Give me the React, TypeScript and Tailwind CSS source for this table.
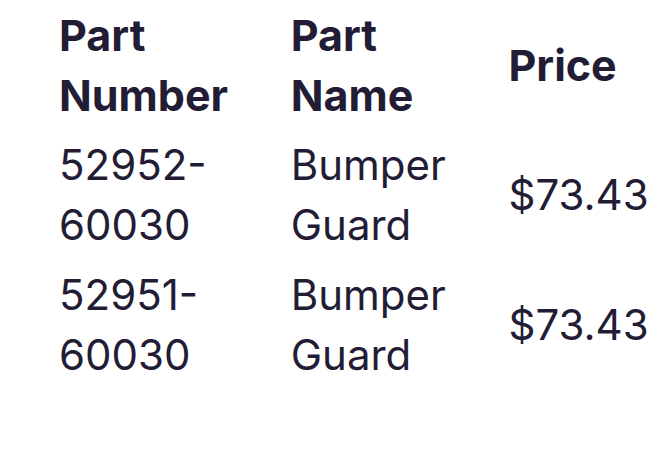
import React from 'react';

const rows = [
    { number: '52952-60030', name: 'Bumper Guard', price: '$73.43' },
    { number: '52951-60030', name: 'Bumper Guard', price: '$73.43' },
];

export default function App() {
    return (
        <div className="min-h-screen bg-white pl-[59px] text-[#221c35]" style={{ fontFamily: 'Inter, "Noto Sans", sans-serif' }}>
            <table className="table-fixed border-collapse text-[42px] leading-[60px]">
                <colgroup>
                    <col className="w-[233px]" />
                    <col className="w-[219px]" />
                    <col className="w-[158px]" />
                </colgroup>
                <thead className="text-[43px]">
                    <tr>
                        <th className="py-[5px] pr-4 text-left align-middle font-bold">Part Number</th>
                        <th className="py-[5px] pr-4 text-left align-middle font-bold">Part Name</th>
                        <th className="py-[5px] text-left align-middle font-bold">Price</th>
                    </tr>
                </thead>
                <tbody>
                    {rows.map((r) => (
                        <tr key={r.number}>
                            <td className="py-[5px] pr-4 align-middle break-words">{r.number}</td>
                            <td className="py-[5px] pr-4 align-middle">{r.name}</td>
                            <td className="py-[5px] align-middle">{r.price}</td>
                        </tr>
                    ))}
                </tbody>
            </table>
        </div>
    );
}
